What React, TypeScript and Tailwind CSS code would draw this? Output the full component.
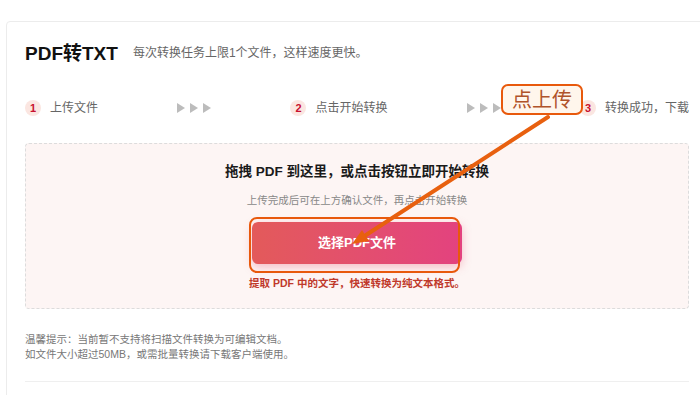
import React from 'react';

const font = { fontFamily: '"Liberation Sans", "Noto Sans CJK SC", sans-serif' };

function Badge({ n }: { n: number }) {
  return (
    <span className="flex h-[16px] w-[16px] flex-shrink-0 items-center justify-center rounded-full bg-[#fbe6e1] text-[11px] font-bold leading-none text-[#c8102e]">
      {n}
    </span>
  );
}

function Step({ n, label }: { n: number; label: string }) {
  return (
    <div className="flex items-center gap-[9px]">
      <Badge n={n} />
      <span className="text-[12px] leading-[16px] text-[#666]">{label}</span>
    </div>
  );
}

function Arrows() {
  return (
    <svg width="34" height="10" viewBox="0 0 34 10" className="flex-shrink-0">
      <polygon points="0,0 8,5 0,10" fill="#bcbcbc" />
      <polygon points="13,0 21,5 13,10" fill="#bcbcbc" />
      <polygon points="26,0 34,5 26,10" fill="#bcbcbc" />
    </svg>
  );
}

export default function App() {
  return (
    <div className="relative h-[395px] w-[700px] overflow-hidden bg-white" style={font}>
      <div className="pl-[6px] pt-[21px]">
        <div className="w-[702px] rounded-[4px] border border-[#ececec] bg-white px-[18px] pt-[20px]">
          {/* Header */}
          <div className="flex h-[22px] items-center">
            <h1 className="text-[19px] font-bold leading-none text-[#111]">PDF转TXT</h1>
            <p className="ml-[15px] text-[12px] leading-none text-[#666]">
              每次转换任务上限1个文件，这样速度更快。
            </p>
          </div>

          {/* Steps */}
          <div className="mt-[36px] flex h-[16px] items-center justify-between">
            <Step n={1} label="上传文件" />
            <Arrows />
            <Step n={2} label="点击开始转换" />
            <Arrows />
            <Step n={3} label="转换成功，下载" />
          </div>

          {/* Drop zone */}
          <div className="mt-[27px] flex flex-col items-center rounded-[4px] border border-dashed border-[#dcdcdc] bg-[#fdf5f4] pb-[18px] pt-[18px]">
            <p className="text-[13.5px] font-bold leading-[20px] text-[#1a1a1a]">
              拖拽 PDF 到这里，或点击按钮立即开始转换
            </p>
            <p className="mt-[11px] text-[10.5px] leading-[14px] text-[#888]">
              上传完成后可在上方确认文件，再点击开始转换
            </p>
            <button className="mt-[15px] h-[42px] w-[210px] rounded-[6px] bg-gradient-to-r from-[#e35a5a] to-[#e3427f] text-[13px] font-bold text-white shadow-[0_3px_10px_rgba(228,80,110,0.35)]">
              选择PDF文件
            </button>
            <p className="mt-[12px] text-[10.5px] font-bold leading-[14px] text-[#c0392b]">
              提取 PDF 中的文字，快速转换为纯文本格式。
            </p>
          </div>

          {/* Tips */}
          <div className="mt-[23px] text-[10.5px] leading-[15px] text-[#777]">
            <p>温馨提示：当前暂不支持将扫描文件转换为可编辑文档。</p>
            <p>如文件大小超过50MB，或需批量转换请下载客户端使用。</p>
          </div>
          <div className="mt-[19px] h-px bg-[#efefef]" />
          <div className="h-[20px]" />
        </div>
      </div>

      {/* Annotation: highlight around button */}
      <div className="absolute left-[249px] top-[217px] h-[56px] w-[211px] rounded-[8px] border-2 border-[#e8590c]" />

      {/* Annotation: arrow */}
      <svg className="pointer-events-none absolute left-0 top-0" width="700" height="395">
        <line x1="548" y1="117" x2="366" y2="235" stroke="#e8600f" strokeWidth="4" strokeLinecap="round" />
        <polygon points="352,244 369,241 362,230" fill="#e8600f" />
      </svg>

      {/* Annotation: label */}
      <div className="absolute left-[501px] top-[84px] flex h-[31px] w-[82px] items-center justify-center rounded-[7px] border-2 border-[#e8590c] bg-[#fff6ec]">
        <span className="text-[20px] leading-none text-[#b0532a]">点上传</span>
      </div>
    </div>
  );
}
